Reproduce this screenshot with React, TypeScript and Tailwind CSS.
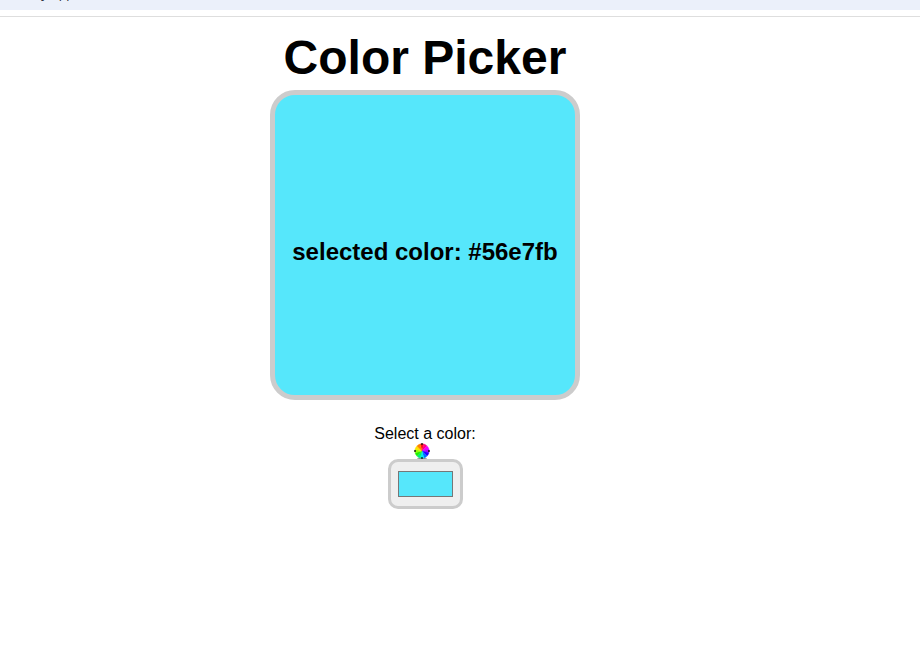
const color = "#56e7fb";

function ColorWheel() {
  const slices = [
    "#ff1010", "#ff0080", "#f000ff", "#b000ff", "#2000ff", "#0070ff",
    "#00e8f0", "#00f070", "#20f000", "#90ff00", "#ffe000", "#ff8000",
  ];
  const point = (deg: number) => {
    const a = (deg * Math.PI) / 180;
    return `${8 + 7.2 * Math.sin(a)} ${8 - 7.2 * Math.cos(a)}`;
  };
  return (
    <svg className="block h-4 w-4" viewBox="0 0 16 16">
      <ellipse cx="8" cy="15.2" rx="5" ry="0.8" fill="#888888" />
      {slices.map((fill, i) => (
        <path
          key={fill}
          fill={fill}
          stroke={fill}
          strokeWidth="0.4"
          d={`M8 8L${point(i * 30 - 15)}A7.2 7.2 0 0 1 ${point(i * 30 + 15)}Z`}
        />
      ))}
      <path
        d="M7.1 0.3h1.8v1.5H7.1zM7.1 14.2h1.8v1.5H7.1zM0.3 7.1h1.5v1.8H0.3zM14.2 7.1h1.5v1.8h-1.5z"
        fill="#181818"
      />
    </svg>
  );
}

export default function App() {
  return (
    <div className="h-[656px] w-full overflow-hidden bg-white font-['Liberation_Sans',Arial,sans-serif] text-black">
      <div className="flex h-[10px] items-start overflow-hidden bg-[#ebf0fa] pl-[30px]">
        <span className="-mt-[14px] font-['Open_Sans',sans-serif] text-[12.5px] leading-4 text-[#1f2937]">
          My Apps
        </span>
      </div>
      <div className="mt-[6px] h-px bg-[#dedede]" />
      <main className="flex w-[850px] flex-col items-center pt-[13px]">
        <h1 className="h-[60px] text-5xl leading-[55px] font-bold">Color Picker</h1>
        <div
          className="flex h-[310px] w-[310px] items-center justify-center rounded-[25px] border-[5px] border-[#cccccc] bg-[#56e7fb] pt-[13px]"
        >
          <p className="text-2xl leading-7 font-bold whitespace-nowrap">selected color: {color}</p>
        </div>
        <label className="mt-6 text-base leading-[19px]">Select a color:</label>
        <div className="mr-[6px] h-4">
          <ColorWheel />
        </div>
        <button
          aria-label="Select a color"
          className="flex h-[50px] w-[75px] items-center justify-center rounded-[10px] border-[3px] border-[#cccccc] bg-[#efefef]"
        >
          <span className="h-[26px] w-[55px] border border-[#777777] bg-[#56e7fb]" />
        </button>
      </main>
    </div>
  );
}
